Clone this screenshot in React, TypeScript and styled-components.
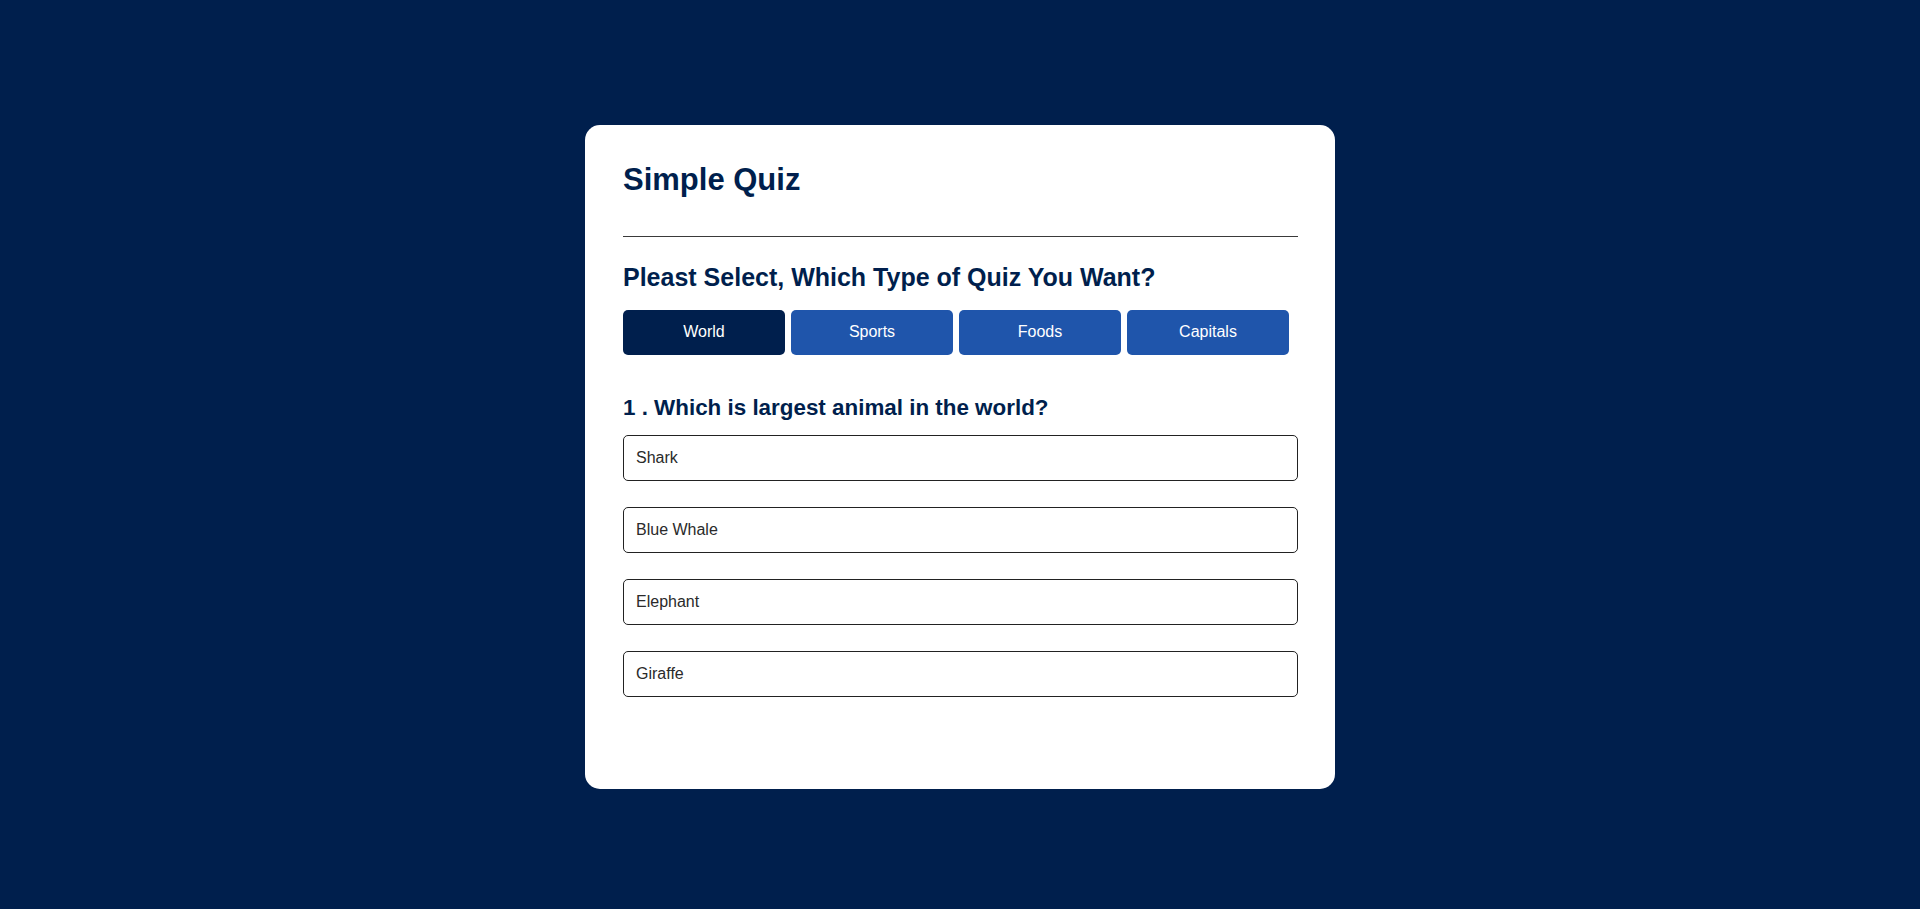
import React, { useState } from "react";
import styled, { createGlobalStyle } from "styled-components";

const GlobalStyle = createGlobalStyle`
  html, body {
    margin: 0;
    padding: 0;
    background: #001f4d;
    font-family: "Liberation Sans", Arial, sans-serif;
  }
  * { box-sizing: border-box; }
`;

const Page = styled.div`
  min-height: 100vh;
  display: flex;
  flex-direction: column;
  align-items: center;
  padding-top: 125px;
  background: #001f4d;
`;

const Card = styled.div`
  width: 750px;
  background: #ffffff;
  border-radius: 15px;
  padding: 37px 37px 92px 38px;
  display: flex;
  flex-direction: column;
`;

const Title = styled.h1`
  margin: 0;
  font-size: 31px;
  line-height: 36px;
  font-weight: 700;
  color: #001f4d;
`;

const Divider = styled.hr`
  margin: 38px 0 0;
  border: none;
  border-top: 1px solid #3a3a3a;
  height: 0;
`;

const SectionHeading = styled.h2`
  margin: 25.5px 0 0;
  font-size: 25px;
  line-height: 28px;
  font-weight: 700;
  color: #001f4d;
`;

const CategoryRow = styled.div`
  display: flex;
  gap: 6px;
  margin-top: 19.5px;
`;

const CategoryButton = styled.button<{ $active?: boolean }>`
  width: 162px;
  height: 44.5px;
  border: none;
  border-radius: 5px;
  background: ${(p) => (p.$active ? "#001f4d" : "#1f55ab")};
  color: #ffffff;
  font-family: "Liberation Sans", Arial, sans-serif;
  font-size: 16px;
  cursor: pointer;
  padding: 0;
`;

const Question = styled.h3`
  margin: 40.7px 0 0;
  font-size: 22.4px;
  line-height: 26px;
  font-weight: 700;
  color: #001f4d;
`;

const OptionList = styled.ul`
  list-style: none;
  margin: 14px 0 0;
  padding: 0;
  display: flex;
  flex-direction: column;
  gap: 25.8px;
`;

const OptionItem = styled.li`
  height: 46px;
  border: 1px solid #222222;
  border-radius: 5px;
  padding: 0 12px;
  display: flex;
  align-items: center;
  font-size: 16px;
  color: #2a2a2a;
  cursor: pointer;
`;

const categories = ["World", "Sports", "Foods", "Capitals"];
const options = ["Shark", "Blue Whale", "Elephant", "Giraffe"];

export default function App() {
  const [active, setActive] = useState("World");
  return (
    <>
      <GlobalStyle />
      <Page>
        <Card>
          <Title>Simple Quiz</Title>
          <Divider />
          <SectionHeading>Pleast Select, Which Type of Quiz You Want?</SectionHeading>
          <CategoryRow>
            {categories.map((c) => (
              <CategoryButton key={c} $active={c === active} onClick={() => setActive(c)}>
                {c}
              </CategoryButton>
            ))}
          </CategoryRow>
          <Question>1 . Which is largest animal in the world?</Question>
          <OptionList>
            {options.map((o) => (
              <OptionItem key={o}>{o}</OptionItem>
            ))}
          </OptionList>
        </Card>
      </Page>
    </>
  );
}
